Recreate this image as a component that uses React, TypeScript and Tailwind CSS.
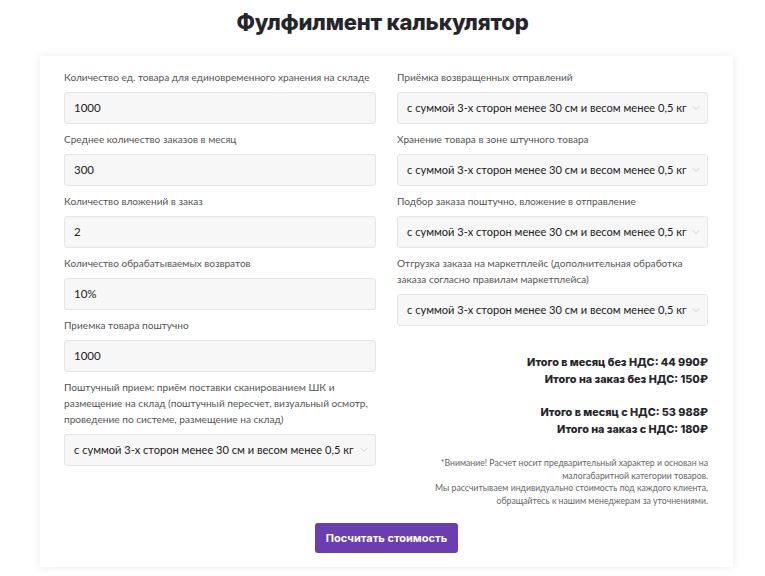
import { ChevronDown } from 'lucide-react';

const sizeOption = 'с суммой 3-х сторон менее 30 см и весом менее 0,5 кг';

// Plain text field
function Field({ label, value }: { label: string; value: string }) {
  return (
    <div className="flex flex-col">
      <label className="text-[10.1px] leading-4 text-[#555] mb-[7px]">{label}</label>
      <div className="h-8 flex items-center px-[9px] bg-[#f7f7f7] border border-[#e6e6e6] rounded-[3px] text-[11.5px] text-[#222]">
        {value}
      </div>
    </div>
  );
}

// Select-like field with chevron
function SelectField({ label }: { label: string }) {
  return (
    <div className="flex flex-col">
      <label className="text-[10.1px] leading-4 text-[#555] mb-[7px]">{label}</label>
      <div className="h-8 flex items-center justify-between pl-[9px] pr-[5px] bg-[#f7f7f7] border border-[#e6e6e6] rounded-[3px] text-[11.1px] text-[#222]">
        <span className="whitespace-nowrap overflow-hidden">{sizeOption}</span>
        <ChevronDown className="w-3 h-3 shrink-0 text-[#c4c4c4]" strokeWidth={1.5} />
      </div>
    </div>
  );
}

export default function App() {
  return (
    <div className="w-[765px] h-[576px] bg-white overflow-hidden font-['Lato',sans-serif]">
      <h1 className="text-center pt-[8px] text-[22px] leading-[28px] font-extrabold text-[#25252b] font-['Inter',sans-serif] tracking-[-0.2px]">
        Фулфилмент калькулятор
      </h1>

      <div className="mx-[40px] mt-[20px] w-[693px] h-[511px] bg-white shadow-[0_0_10px_rgba(0,0,0,0.08)] px-[24px] pt-[13px]">
        <div className="grid grid-cols-[312px_311px] gap-x-[21px]">
          {/* Left column */}
          <div className="flex flex-col gap-[7px]">
            <Field label="Количество ед. товара для единовременного хранения на складе" value="1000" />
            <Field label="Среднее количество заказов в месяц" value="300" />
            <Field label="Количество вложений в заказ" value="2" />
            <Field label="Количество обрабатываемых возвратов" value="10%" />
            <Field label="Приемка товара поштучно" value="1000" />
            <SelectField label="Поштучный прием: приём поставки сканированием ШК и размещение на склад (поштучный пересчет, визуальный осмотр, проведение по системе, размещение на склад)" />
          </div>

          {/* Right column */}
          <div className="flex flex-col">
            <div className="flex flex-col gap-[7px]">
              <SelectField label="Приёмка возвращенных отправлений" />
              <SelectField label="Хранение товара в зоне штучного товара" />
              <SelectField label="Подбор заказа поштучно, вложение в отправление" />
              <SelectField label="Отгрузка заказа на маркетплейс (дополнительная обработка заказа согласно правилам маркетплейса)" />
            </div>

            <div className="mt-[28px] flex flex-col items-end text-right font-['Inter',sans-serif] font-extrabold text-[10.8px] leading-[17px] text-[#25252b]">
              <p>Итого в месяц без НДС: 44 990₽</p>
              <p>Итого на заказ без НДС: 150₽</p>
              <p className="mt-[16px]">Итого в месяц с НДС: 53 988₽</p>
              <p>Итого на заказ с НДС: 180₽</p>
            </div>

            <div className="mt-[19px] text-right text-[8.7px] leading-[12.6px] text-[#666]">
              <p>*Внимание! Расчет носит предварительный характер и основан на</p>
              <p>малогабаритной категории товаров.</p>
              <p>Мы рассчитываем индивидуально стоимость под каждого клиента,</p>
              <p>обращайтесь к нашим менеджерам за уточнениями.</p>
            </div>
          </div>
        </div>

        <div className="flex justify-center mt-[16px]">
          <button className="w-[143px] h-[30px] rounded-[3px] bg-[#6a3db0] text-white text-[11px] font-bold font-['Inter',sans-serif]">
            Посчитать стоимость
          </button>
        </div>
      </div>
    </div>
  );
}
